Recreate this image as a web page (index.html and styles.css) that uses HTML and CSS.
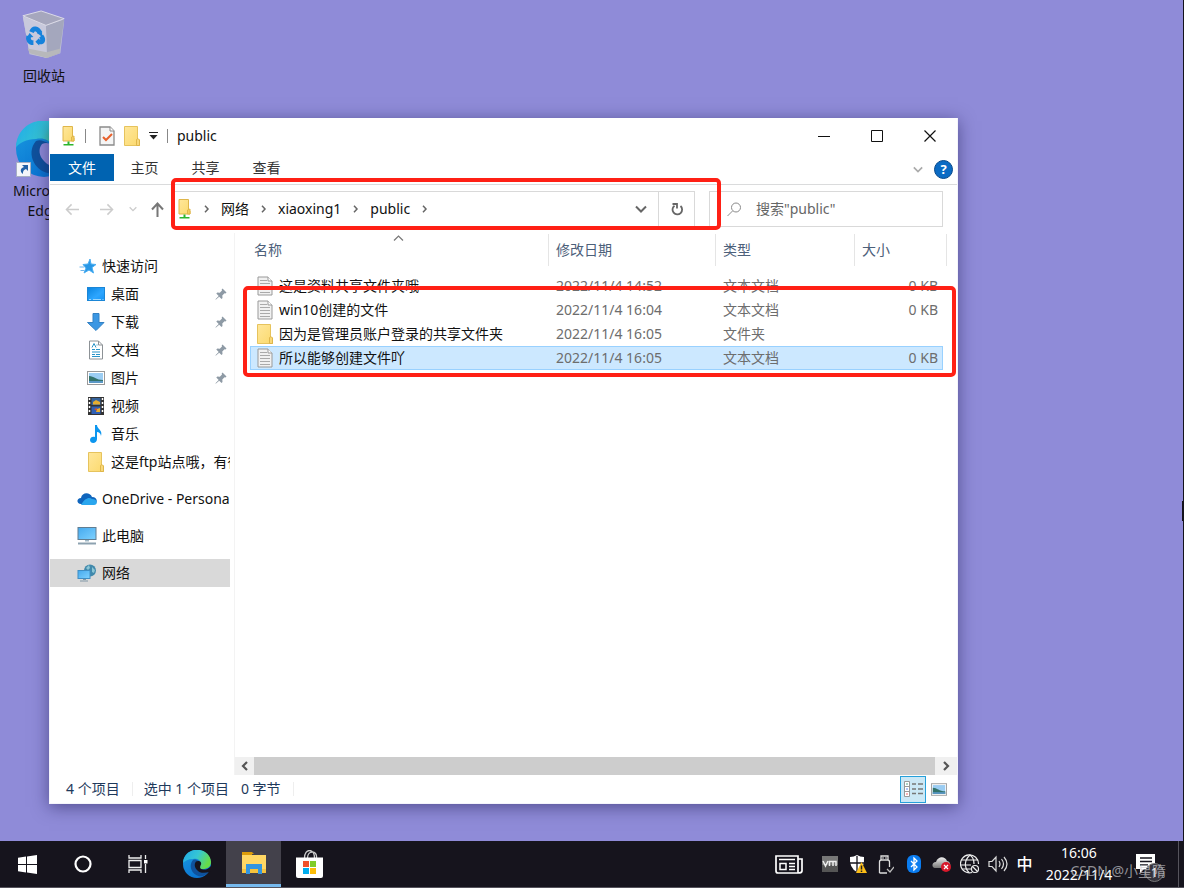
FILE: index.html
```html
<!DOCTYPE html>
<html lang="zh-CN">
<head>
<meta charset="utf-8">
<title>public</title>
<link rel="stylesheet" href="styles.css">
</head>
<body>
<svg class="defs" aria-hidden="true">
  <defs>
    <linearGradient id="edgeA" x1="0" y1="0" x2="1" y2="0.4"><stop offset="0" stop-color="#1fa8ea"/><stop offset=".55" stop-color="#36c6d4"/><stop offset="1" stop-color="#66dc48"/></linearGradient>
    <linearGradient id="edgeB" x1="0" y1="0" x2="0.6" y2="1"><stop offset="0" stop-color="#1a9be0"/><stop offset="1" stop-color="#0a72d2"/></linearGradient>
    <linearGradient id="screen" x1="0" y1="0" x2="1" y2="1"><stop offset="0" stop-color="#45a9ee"/><stop offset="1" stop-color="#7fd2ff"/></linearGradient>
    <linearGradient id="fold" x1="0" y1="0" x2="1" y2="1"><stop offset="0" stop-color="#ffe79b"/><stop offset="1" stop-color="#fbd96d"/></linearGradient>
    <linearGradient id="desk" x1="0" y1="0" x2="1" y2="1"><stop offset="0" stop-color="#0a84e0"/><stop offset=".6" stop-color="#2da6ff"/><stop offset="1" stop-color="#1693f4"/></linearGradient>
    <linearGradient id="cloudG" x1="0" y1="0" x2="0" y2="1"><stop offset="0" stop-color="#eee"/><stop offset="1" stop-color="#777"/></linearGradient>
    <symbol id="i-netfolder" viewBox="0 0 14 20"><path d="M1 .5h9.500v10.500l1.500 1v3H1z" fill="url(#fold)" stroke="#dfb64a"/><path d="M9.500 15v-4l2.500-1v5z" fill="#f3cd5e" stroke="#dfb64a"/><path d="M5.500 15.500h2V18h4v1.500h-10V18h4z" fill="#2cb52c"/></symbol>
    <symbol id="i-folder" viewBox="0 0 16 20"><path d="M.5.500h13V13l2 1v5.500H.5z" fill="url(#fold)" stroke="#e6c35d"/><path d="M12.500 19.500v-6l1.500-1 1.500 1.500v5.500z" fill="#f8d87a" stroke="#dfb64a"/></symbol>
    <symbol id="i-check" viewBox="0 0 16 20"><path d="M1 1h10l4 4v14H1z" fill="#f5f5f5" stroke="#8a8a8a" stroke-width="1.300"/><path d="M11 1v4h4" fill="#fff" stroke="#8a8a8a"/><path d="M4 11l3 3 6-6" fill="none" stroke="#e8612c" stroke-width="2"/></symbol>
    <symbol id="i-text" viewBox="0 0 16 20"><path d="M1 1h10l4 4v14H1z" fill="#f1f1f1" stroke="#999"/><path d="M11 1v4h4" fill="#fff" stroke="#999"/><path d="M3 4.500h7M3 7.500h10M3 10.500h10M3 13.500h10M3 16.500h10" stroke="#aaa"/></symbol>
    <symbol id="i-star" viewBox="0 0 18 18"><path d="M11 2l1 5 5 .5-4 3 1.500 5.500-4.500-3L5 16l2-5-3-3.500 5-.5z" fill="#2997e5" stroke="#4aaef2"/><path d="M.5 10h5M1.500 13.500h4" stroke="#6cb4ea"/></symbol>
    <symbol id="i-desktop" viewBox="0 0 18 18"><rect x=".5" y="2.500" width="17" height="13" fill="url(#desk)" stroke="#1b86d6"/><path d="M2 14.500h2M6 14.500h8M15.500 14.500h1" stroke="#9bd7ff"/></symbol>
    <symbol id="i-down" viewBox="0 0 18 18"><path d="M6 .5h6v9h5L9 17.500.500 9.500H6z" fill="#3b97e3" stroke="#3381c4"/></symbol>
    <symbol id="i-doc" viewBox="0 0 18 20"><path d="M2.500 1h9l4 4v14h-13z" fill="#fff" stroke="#8d9296"/><path d="M11.500 1v4h4" fill="none" stroke="#8d9296"/><path d="M5 7.500l2-4 2 4M9.500 5h1M5 9.500h3M9 9.500h4M5 12h8M5 14.500h3M9 14.500h4M5 16.500h8" fill="none" stroke="#2893c7"/></symbol>
    <symbol id="i-pic" viewBox="0 0 18 14"><rect x=".500" y=".500" width="17" height="13" fill="#fff" stroke="#999"/><path d="M2 2h14v10H2z" fill="#9bcdf3"/><path d="M2 5c5 0 7 4 14 4v3H2z" fill="#33736b"/><path d="M2 10h14v2H2z" fill="#5b98c6"/></symbol>
    <symbol id="i-video" viewBox="0 0 16 18"><path d="M0 0h16v18H0z" fill="#333"/><path d="M3.500 1h9v7h-9z" fill="#36639b"/><path d="M3.500 9.500h9V17h-9z" fill="#2e5fb5"/><path d="M5 5l3-2 4 2v2.500H5zM8 15l1-3 3-1v4z" fill="#e6ad2f"/><path d="M6 12l3-1v3z" fill="#cc5437"/><path d="M1.500 1v16M14.500 1v16" stroke="#fff" stroke-width="1.500" stroke-dasharray="2 2"/></symbol>
    <symbol id="i-music" viewBox="0 0 18 20"><path d="M8 1h2c0 4 6 5 4 11-.5-3-2-4-4-4v7c0 5-7 5-7 1 0-3 3-4 5-3z" fill="#0c96ef"/></symbol>
    <symbol id="i-onedrive" viewBox="0 0 20 14"><path d="M4 12C-1 12-.5 6 4 6c1-6 9-6 11-1 6 0 6 7 2 7z" fill="#0f65bd"/><path d="M4 13c4-7 8-8 11-6 6 0 6 6 2 6z" fill="#2aa6ee"/></symbol>
    <symbol id="i-pc" viewBox="0 0 20 18"><rect x="1" y=".500" width="18" height="12" fill="url(#screen)" stroke="#607d92"/><path d="M8 13h4v1.500H8z" fill="#9fb7c5"/><path d="M1 16.500h18" stroke="#8da2b0" stroke-width="2"/></symbol>
    <symbol id="i-network" viewBox="0 0 20 20"><circle cx="13" cy="7.500" r="6" fill="#4189ab"/><path d="M9 5l3-3 1 3-2 2zM15 4l3 3-1 3-2-1z" fill="#8cc6d6"/><rect x="1" y="7.500" width="12" height="8" fill="url(#screen)" stroke="#3f8ec4"/><path d="M6 16.500h3M3 18h8" stroke="#8198a7"/></symbol>
    <symbol id="i-pin" viewBox="0 0 12 12"><path d="M7.500.500l4 4-1 1-1-.300L7.300 7.500l.200 2.500-1 1-2.300-2.300L1 11.500l-.500.200.200-.700 3-3.100L1.300 5.500l1-1 2.500.200L7 2.500l-.300-1z" fill="#8e9aa5"/></symbol>
    <symbol id="i-edge" viewBox="0 0 28 28"><circle cx="14" cy="14" r="14" fill="url(#edgeB)"/><path d="M0 13C1-5 27-4 28 12c0 5-4 7-8 7-3 0-5-1-4-3 4-6-2-8-6-7-5 0-8 2-10 4z" fill="url(#edgeA)"/><path d="M10 10c-6 7 1 18 10 16 3-1 5-3 6-5-7 3-14 0-12-6 0-2 1-3 2-4-2-1-4-2-6-1z" fill="#0f529d"/><path d="M13 11.500c3-1.500 6 .5 5 3-1.500 3-1 4 1 4.800 3 .8 6.500 0 9-3.300v5l-1.700 1c-5 1.500-10 1-12.300-2-2.500-2.500-3-6-1-8.500z" class="edge-notch"/></symbol>
    <symbol id="i-chev-r" viewBox="0 0 7 8"><path d="M2 .800L5 4l-3 3.200" fill="none" stroke="#666" stroke-width="1.500"/></symbol>
    <symbol id="i-chev-d" viewBox="0 0 12 8"><path d="M1 1.500l5 5 5-5" fill="none" stroke="currentColor" stroke-width="2"/></symbol>
    <symbol id="i-arrow" viewBox="0 0 16 14"><path d="M15 7H2M7 1.500L1.500 7 7 12.500" fill="none" stroke="currentColor" stroke-width="1.600"/></symbol>
  </defs>
</svg>

<main class="desktop">
  <a class="shortcut bin" href="#">
    <svg width="46" height="50" viewBox="0 0 46 52"><path d="M1 7l7 39 18 4 14-5 4-34z" fill="#bfc1d4"/><path d="M25 16l19-6-5 35-13 5z" fill="#a4a7bd"/><path d="M1 7l24 9 1 34-18-5z" fill="#c8c9dc"/><path d="M6 40l20 4 14-4-1 5-13 5-18-5z" fill="#b7b8bb"/><path d="M1 6L20 1l24 8-19 7z" fill="#a6a7bd" stroke="#dedde8"/><g fill="none" stroke="#1682dc" stroke-width="5"><path d="M10 23c2-5 6-4 9 1"/><path d="M7 27c-1 4 1 7 5 7"/><path d="M17 33c5 1 6-2 3-6"/></g><path d="M16 24l5-1v5zM5 29l3-5 4 4zM18 29v8l-4-4z" fill="#1682dc"/></svg>
    <span>回收站</span>
  </a>
  <a class="shortcut edge" href="#">
    <span class="edge-pic"><svg class="edge-big" width="56" height="56"><use href="#i-edge"/></svg><svg class="link-badge" width="15" height="15" viewBox="0 0 15 15"><path d="M.5.500h14v14H.5z" fill="#f4f6fa" stroke="#a7afc4"/><path d="M6 3h6v6l-2-2c-3 1-3 3-3 5-4-3-2-6 1-7z" fill="#2161a7"/></svg></span>
    <span>Microsoft<br>Edge</span>
  </a>

  <section class="window" aria-label="public">
    <header class="titlebar">
      <svg width="14" height="20"><use href="#i-netfolder"/></svg>
      <i class="sep lead"></i>
      <button class="plain" aria-label="属性"><svg width="16" height="20"><use href="#i-check"/></svg></button>
      <button class="plain" aria-label="新建文件夹"><svg width="16" height="20"><use href="#i-folder"/></svg></button>
      <button class="plain" aria-label="自定义快速访问工具栏"><svg width="9" height="8" viewBox="0 0 9 8"><path d="M0 .5h9" stroke="#222"/><path d="M.5 3h8l-4 4.500z" fill="#222"/></svg></button>
      <i class="sep"></i>
      <h1>public</h1>
      <div class="caption">
        <button class="plain" aria-label="最小化"><svg width="12" height="12" viewBox="0 0 12 12"><path d="M0 6.500h12" stroke="#111"/></svg></button>
        <button class="plain" aria-label="最大化"><svg width="12" height="12" viewBox="0 0 12 12"><path d="M.5.500h11v11H.5z" fill="none" stroke="#111"/></svg></button>
        <button class="plain" aria-label="关闭"><svg width="12" height="12" viewBox="0 0 12 12"><path d="M.5.500l11 11M11.500.500l-11 11" stroke="#111" stroke-width="1.200"/></svg></button>
      </div>
    </header>

    <nav class="ribbon">
      <button class="tab file">文件</button><button class="tab">主页</button><button class="tab">共享</button><button class="tab">查看</button>
      <div class="ribbon-end">
        <button class="plain pale" aria-label="展开功能区"><svg width="10" height="7"><use href="#i-chev-d"/></svg></button>
        <button class="help" aria-label="帮助">?</button>
      </div>
    </nav>

    <div class="addressrow">
      <div class="history">
        <button class="plain off" aria-label="后退"><svg width="15" height="13"><use href="#i-arrow"/></svg></button>
        <button class="plain off" aria-label="前进"><svg class="flip" width="15" height="13"><use href="#i-arrow"/></svg></button>
        <button class="plain off small" aria-label="最近"><svg width="8" height="6"><use href="#i-chev-d"/></svg></button>
        <button class="plain up" aria-label="上移"><svg width="13" height="15" viewBox="0 0 13 15"><path d="M6.500 15V2M1 7.500L6.500 1.500l5.500 6" fill="none" stroke="#777" stroke-width="2"/></svg></button>
      </div>
      <div class="address">
        <svg width="14" height="20"><use href="#i-netfolder"/></svg>
        <svg width="7" height="8"><use href="#i-chev-r"/></svg>
        <button class="plain crumb">网络</button>
        <svg width="7" height="8"><use href="#i-chev-r"/></svg>
        <button class="plain crumb">xiaoxing1</button>
        <svg width="7" height="8"><use href="#i-chev-r"/></svg>
        <button class="plain crumb">public</button>
        <svg width="7" height="8"><use href="#i-chev-r"/></svg>
        <button class="plain drop" aria-label="以前的位置"><svg width="12" height="8"><use href="#i-chev-d"/></svg></button>
        <button class="plain refresh" aria-label="刷新"><svg width="14" height="14" viewBox="0 0 14 14"><path d="M10.500 4A4.800 4.800 0 1 1 4.500 3.700" fill="none" stroke="#666" stroke-width="1.800"/><path d="M2.500 2h4.500V6.500" fill="none" stroke="#666" stroke-width="1.800"/></svg></button>
      </div>
      <label class="search">
        <svg width="15" height="15" viewBox="0 0 15 15"><circle cx="9" cy="5.500" r="4.500" fill="none" stroke="#8a8a8a"/><path d="M5.500 9L.500 14" stroke="#8a8a8a"/></svg>
        <input type="text" placeholder='搜索"public"' aria-label="搜索">
      </label>
    </div>

    <div class="body">
      <nav class="tree">
        <a href="#" class="node"><svg width="18" height="18"><use href="#i-star"/></svg><span>快速访问</span></a>
        <a href="#" class="node sub"><svg width="18" height="18"><use href="#i-desktop"/></svg><span>桌面</span><svg class="pin" width="12" height="12"><use href="#i-pin"/></svg></a>
        <a href="#" class="node sub"><svg width="18" height="18"><use href="#i-down"/></svg><span>下载</span><svg class="pin" width="12" height="12"><use href="#i-pin"/></svg></a>
        <a href="#" class="node sub"><svg width="18" height="20"><use href="#i-doc"/></svg><span>文档</span><svg class="pin" width="12" height="12"><use href="#i-pin"/></svg></a>
        <a href="#" class="node sub"><svg width="18" height="14"><use href="#i-pic"/></svg><span>图片</span><svg class="pin" width="12" height="12"><use href="#i-pin"/></svg></a>
        <a href="#" class="node sub"><svg width="18" height="18"><use href="#i-video"/></svg><span>视频</span></a>
        <a href="#" class="node sub"><svg width="18" height="20"><use href="#i-music"/></svg><span>音乐</span></a>
        <a href="#" class="node sub"><svg width="18" height="20"><use href="#i-folder"/></svg><span>这是ftp站点哦，有很多文件</span></a>
        <a href="#" class="node root"><svg width="20" height="14"><use href="#i-onedrive"/></svg><span>OneDrive - Personal</span></a>
        <a href="#" class="node root"><svg width="20" height="18"><use href="#i-pc"/></svg><span>此电脑</span></a>
        <a href="#" class="node root current"><svg width="20" height="20"><use href="#i-network"/></svg><span>网络</span></a>
      </nav>

      <div class="content">
        <table class="files">
          <colgroup><col><col class="c-date"><col class="c-type"><col class="c-size"></colgroup>
          <thead><tr>
            <th>名称<svg class="sort" width="11" height="6" viewBox="0 0 11 6"><path d="M1 5.500l4.500-4.500L10 5.500" fill="none" stroke="#777" stroke-width="1.200"/></svg></th>
            <th>修改日期</th><th>类型</th><th>大小</th>
          </tr></thead>
          <tbody>
            <tr><td><span class="name"><svg width="16" height="20"><use href="#i-text"/></svg>这是资料共享文件夹哦</span></td><td>2022/11/4 14:52</td><td>文本文档</td><td>0 KB</td></tr>
            <tr><td><span class="name"><svg width="16" height="20"><use href="#i-text"/></svg>win10创建的文件</span></td><td>2022/11/4 16:04</td><td>文本文档</td><td>0 KB</td></tr>
            <tr><td><span class="name"><svg width="16" height="20"><use href="#i-folder"/></svg>因为是管理员账户登录的共享文件夹</span></td><td>2022/11/4 16:05</td><td>文件夹</td><td></td></tr>
            <tr class="picked"><td><span class="name"><svg width="16" height="20"><use href="#i-text"/></svg>所以能够创建文件吖</span></td><td>2022/11/4 16:05</td><td>文本文档</td><td>0 KB</td></tr>
          </tbody>
        </table>
        <div class="hscroll">
          <button class="plain" aria-label="向左滚动"><svg width="9" height="10" viewBox="0 0 9 10"><path d="M7 1L3 5l4 4" fill="none" stroke="#555" stroke-width="2.200"/></svg></button>
          <div class="thumb"></div>
          <button class="plain wide" aria-label="向右滚动"><svg width="9" height="10" viewBox="0 0 9 10"><path d="M2 1l4 4-4 4" fill="none" stroke="#555" stroke-width="2.200"/></svg></button>
        </div>
      </div>
    </div>

    <footer class="status">
      <span class="count">4 个项目</span>
      <span class="chosen"><span>选中 1 个项目</span><span>0 字节</span></span>
      <div class="views">
        <button class="plain view on" aria-label="详细信息"><svg width="19" height="16" viewBox="0 0 19 16"><path d="M.5.500h5v15h-5zM.5 5.500h5M.5 10.500h5" fill="#fff" stroke="#999"/><path d="M2.500 3h1" stroke="#286" stroke-width="1.500"/><path d="M2.500 8h1" stroke="#36e" stroke-width="1.500"/><path d="M2.500 13h1" stroke="#e33" stroke-width="1.500"/><path d="M8 3h4M14 3h5M8 8h4M14 8h5M8 12.500h4M14 12.500h5" stroke="#777" stroke-width="1.300"/></svg></button>
        <button class="plain view" aria-label="大图标"><svg width="16" height="13"><use href="#i-pic"/></svg></button>
      </div>
    </footer>
    <div class="mark mark-address"></div>
    <div class="mark mark-files"></div>
  </section>
  <i class="caret"></i>
</main>

<footer class="taskbar">
  <div class="apps">
    <button class="plain app" aria-label="开始"><svg width="19" height="19" viewBox="0 0 19 19"><path d="M0 2.700L8 1.600V9H0zM9 1.400L19 0v9H9zM0 10h8v7.400l-8-1.100zM9 10h10v9L9 17.600z" fill="#fff"/></svg></button>
    <button class="plain app" aria-label="搜索"><svg width="18" height="18" viewBox="0 0 18 18"><circle cx="9" cy="9" r="7.500" fill="none" stroke="#fff" stroke-width="2.200"/></svg></button>
    <button class="plain app" aria-label="任务视图"><svg width="20" height="18" viewBox="0 0 20 18"><path d="M1 0v3h12V0M1 18v-3h12v3M1 5.500h12v7H1zM17.500 0v4M17.500 9v9" fill="none" stroke="#eee" stroke-width="1.300"/><path d="M16 5h3.500v3.500H16z" fill="#fff"/></svg></button>
    <button class="plain app edge-app" aria-label="Microsoft Edge"><svg width="28" height="28"><use href="#i-edge"/></svg></button>
    <button class="plain app active" aria-label="文件资源管理器"><svg width="26" height="22" viewBox="0 0 26 22"><path d="M1 0h10l2 2H1z" fill="#d99a09"/><path d="M1 1h10v2h14v18H1z" fill="#ffd764"/><path d="M1 0h10v3H1z" fill="#dc9c0b"/><path d="M1 17h24v4H1z" fill="#f7c33c"/><path d="M5 12h16v10h-4v-5H9v5H5z" fill="#3295e0"/></svg></button>
    <button class="plain app" aria-label="Microsoft Store"><svg width="27" height="28" viewBox="0 0 27 28"><path d="M8.500 8c0-10 10-10 10 0M11.500 8c0-8 10-8 9 0" fill="none" stroke="#ccc" stroke-width="1.300"/><path d="M0 7.500h27V26q0 2-2 2H2q-2 0-2-2z" fill="#fff"/><path d="M7 11h6v6H7z" fill="#f1512b"/><path d="M14 11h6v6h-6z" fill="#80cc28"/><path d="M7 18h6v6H7z" fill="#00adef"/><path d="M14 18h6v6h-6z" fill="#fbbc09"/></svg></button>
  </div>
  <div class="tray">
    <button class="plain news" aria-label="资讯"><svg width="28" height="19" viewBox="0 0 28 19"><path d="M1 1h22v17H3q-2 0-2-2zM23 4h4v12q0 2-4 2" fill="none" stroke="#fff" stroke-width="1.700"/><path d="M4 4.500h16M14 8.500h6M14 11.500h6M14 14.500h6M5 8.500h6v6H5z" fill="none" stroke="#fff" stroke-width="1.500"/></svg></button>
    <button class="plain ti" aria-label="VMware"><svg width="16" height="16" viewBox="0 0 16 16"><path d="M0 0h16v16H0z" fill="#777"/><path d="M0 9h16v7H0z" fill="#555"/><path d="M1 5l2.500 5L6 5M7.500 10V5.500h6.500V10M11 6v4" fill="none" stroke="#eee" stroke-width="1.500"/></svg></button>
    <button class="plain ti" aria-label="安全中心"><svg width="18" height="18" viewBox="0 0 18 18"><path d="M8 0q3 2 7 2 1 12-7 15Q0 13 1 2q4 0 7-2z" fill="#fff"/><path d="M8 1v16M0 8h16" stroke="#16141d" stroke-width="1.300"/><path d="M12.500 7L18 18H7z" fill="#fcbd16"/><path d="M12.500 10.500v4M12.500 15.500V17" stroke="#222" stroke-width="1.500"/></svg></button>
    <button class="plain ti" aria-label="弹出设备"><svg width="16" height="19" viewBox="0 0 16 19"><path d="M3 5V1h7v4M1.500 18V7q0-2 2-2h6q2 0 2 2v5M1.500 18H9" fill="none" stroke="#ddd" stroke-width="1.300"/><path d="M5 2v2M8 2v2" stroke="#ddd"/><path d="M9 14l3 3 4-5" fill="none" stroke="#bbb" stroke-width="1.300"/></svg></button>
    <button class="plain ti" aria-label="蓝牙"><svg width="14" height="18" viewBox="0 0 14 18"><rect width="14" height="18" rx="6" fill="#0a7cf0"/><path d="M4 6l6 6-3 3V3l3 3-6 6" fill="none" stroke="#fff" stroke-width="1.300"/></svg></button>
    <button class="plain ti" aria-label="OneDrive"><svg width="20" height="16" viewBox="0 0 20 16"><path d="M3 12C-1 11 0 6 4 6c2-6 9-6 11-1 4 1 4 5 2 7z" fill="url(#cloudG)"/><circle cx="14" cy="11" r="5" fill="#d7182a"/><path d="M12 9l4 4M16 9l-4 4" stroke="#fff" stroke-width="1.200"/></svg></button>
    <button class="plain ti" aria-label="网络"><svg width="20" height="20" viewBox="0 0 20 20"><g fill="none" stroke="#eee" stroke-width="1.200"><path d="M12 18.500A9 9 0 1 1 18.500 10"/><path d="M9 18.500c-5-5-5-12 1-17.500 3 2 4 5 4 9M2 6h16M1 11h10M2 15h9"/><circle cx="15" cy="15" r="3.500"/><path d="M12.500 12.500l5 5"/></g></svg></button>
    <button class="plain ti" aria-label="音量"><svg width="20" height="18" viewBox="0 0 20 18"><path d="M1 6.500h3L8 2v14l-4-4.500H1zM11 6q2 3 0 6M13.500 4q4 5 0 10M16 2q6 7 0 14" fill="none" stroke="#ddd" stroke-width="1.200"/></svg></button>
    <button class="plain ime">中</button>
    <button class="plain clock"><time>16:06</time><time>2022/11/4</time></button>
    <button class="plain notice" aria-label="通知"><svg width="20" height="20" viewBox="0 0 20 20"><path d="M0 0h19v15H8l-4 4v-4H0z" fill="#fff"/><path d="M4 4h12M4 7.500h12M4 11h8" stroke="#16141d" stroke-width="1.300"/></svg><span class="badge">1</span></button>
  </div>
  <span class="watermark">CSDN @小星隋</span>
</footer>
</body>
</html>
```

FILE: styles.css
```css
* { box-sizing: border-box; }

body {
  margin: 0;
  height: 100vh;
  display: flex;
  flex-direction: column;
  overflow: hidden;
  font: 14px/20px "Noto Sans", "Noto Sans CJK SC", sans-serif;
  color: #111;
}

svg { display: block; flex: none; }
.defs { position: absolute; width: 0; height: 0; }
a { color: inherit; text-decoration: none; }

.plain {
  display: flex;
  align-items: center;
  justify-content: center;
  padding: 0;
  border: 0;
  background: none;
  font: inherit;
  color: inherit;
}

/* Desktop */
.desktop {
  --notch: #8f8bd8;
  position: relative;
  flex: 1;
  min-height: 0;
  background: #8f8bd8;
  border-right: 1px solid #14121c;
}

.shortcut {
  position: absolute;
  left: 0;
  width: 88px;
  display: flex;
  flex-direction: column;
  align-items: center;
  text-align: center;
}
.bin { top: 10px; gap: 6px; }
.edge { top: 121px; gap: 4px; }
.edge-pic { position: relative; }
.edge-notch { fill: var(--notch); }
.link-badge { position: absolute; left: 0; bottom: 0; }

.caret {
  position: absolute;
  right: 0;
  top: 501px;
  width: 1px;
  height: 20px;
  background: #14121c;
}

/* Window */
.window {
  position: absolute;
  left: 49px;
  top: 118px;
  right: 225px;
  bottom: 37px;
  display: flex;
  flex-direction: column;
  background: #fff;
  border: 1px solid #f4f4fb;
  border-top: 0;
  box-shadow: 0 3px 16px rgba(20, 15, 70, .5);
}

.titlebar {
  display: flex;
  align-items: center;
  gap: 9px;
  height: 36px;
  padding-left: 12px;
}
.sep { width: 1px; height: 14px; background: #888; }
.lead { margin-right: 4px; }
h1 { margin: 0; font-size: 14px; font-weight: 400; }
.caption { display: flex; margin-left: auto; margin-right: 1px; align-self: stretch; }
.caption .plain { width: 53px; }

.ribbon {
  display: flex;
  height: 31px;
  padding-bottom: 3px;
  border-bottom: 1px solid #dadbdc;
}
.tab {
  width: 61px;
  padding: 0;
  border: 0;
  background: none;
  font: inherit;
  color: #333;
}
.tab.file { width: 64px; background: #0063b1; color: #fff; }
.ribbon-end { display: flex; align-items: center; gap: 11px; margin-left: auto; padding: 3px 4px 0 0; }
.pale { color: #aaa; }
.help {
  width: 19px;
  height: 19px;
  padding: 0;
  border: 1px solid #07498c;
  border-radius: 50%;
  background: #0b6bc4;
  color: #fff;
  font: bold 13px/16px "Noto Sans", sans-serif;
}

.addressrow {
  display: flex;
  align-items: center;
  height: 48px;
  padding-right: 14px;
}
.history { display: flex; align-items: center; width: 123px; padding-left: 15px; gap: 19px; }
.off { color: #ccc; }
.small { margin: 0 -5px 0 -4px; }
.flip { transform: scaleX(-1); }
.address {
  flex: 1;
  display: flex;
  align-items: center;
  height: 36px;
  padding-left: 4px;
  gap: 11px;
  border: 1px solid #d9d9d9;
}
.drop { margin-left: auto; color: #666; }
.refresh { align-self: stretch; width: 36px; border-left: 1px solid #d9d9d9; }
.search {
  display: flex;
  align-items: center;
  gap: 14px;
  width: 234px;
  height: 36px;
  margin-left: 14px;
  padding-left: 17px;
  border: 1px solid #d9d9d9;
}
.search input {
  flex: 1;
  min-width: 0;
  padding: 0;
  border: 0;
  outline: 0;
  background: none;
  font: inherit;
}
.search input::placeholder { color: #666; opacity: 1; }

.body { flex: 1; display: flex; min-height: 0; }

/* Folder tree */
.tree {
  width: 185px;
  padding: 19px 4px 0 0;
  border-right: 1px solid #f3f3f3;
}
.node {
  display: flex;
  align-items: center;
  gap: 5px;
  height: 28px;
  padding-left: 29px;
  white-space: nowrap;
  overflow: hidden;
}
.node span { flex: 1; min-width: 0; overflow: hidden; }
.sub { padding-left: 37px; gap: 6px; }
.root { margin-top: 9px; padding-left: 27px; }
.current { background: #d9d9d9; }
.pin { margin-right: 3px; }

/* File list */
.content { flex: 1; min-width: 0; display: flex; flex-direction: column; }
.files {
  table-layout: fixed;
  width: calc(100% - 29px);
  margin: 1px 14px 0 15px;
  border-collapse: separate;
  border-spacing: 0;
}
.c-date { width: 167px; }
.c-type { width: 139px; }
.c-size { width: 89px; }
.files th {
  position: relative;
  height: 32px;
  padding: 0 0 0 7px;
  border-left: 1px solid #e5e5e5;
  text-align: left;
  font-weight: 400;
  color: #4c607a;
}
.files th:first-child { padding-left: 4px; border-left: 0; }
.files th:last-child::after {
  content: "";
  position: absolute;
  top: 0;
  bottom: 0;
  right: -4px;
  width: 1px;
  background: #e5e5e5;
}
.files thead::after { content: ""; display: block; height: 8px; }
.sort { position: absolute; left: 50%; top: 1px; margin-left: -6px; }
.files td {
  height: 24px;
  padding: 0 0 0 8px;
  border: 1px solid transparent;
  border-width: 1px 0;
  color: #6d6d6d;
  line-height: 20px;
}
.files td:first-child { padding-left: 7px; color: #111; }
.files td:last-child { padding-right: 5px; text-align: right; }
.name { display: flex; align-items: center; gap: 6px; white-space: nowrap; }
.picked td { background: #cce8ff; border-color: #99d1ff; }
.picked td:first-child { border-left-width: 1px; padding-left: 6px; }
.picked td:last-child { border-right-width: 1px; padding-right: 4px; }

.hscroll { display: flex; height: 18px; margin-top: auto; background: #f0f0f0; }
.hscroll .plain { width: 19px; }
.hscroll .wide { width: 22px; }
.thumb { flex: 1; background: #cdcdcd; }

.status { display: flex; align-items: center; height: 28px; padding-left: 16px; color: #1e395b; }
.count, .chosen { padding-right: 12px; border-right: 1px solid #eee; line-height: 14px; }
.chosen { display: flex; gap: 12px; padding-left: 11px; }
.views { display: flex; align-items: center; margin-left: auto; padding-right: 5px; }
.view { width: 26px; height: 27px; }
.on { border: 1px solid #26a0da; background: #cbe8f6; }

/* Red highlight frames */
.mark { position: absolute; border: 4px solid #ff2015; border-radius: 5px; pointer-events: none; }
.mark-address { left: 121px; top: 60px; right: 236px; height: 52px; }
.mark-files { left: 193px; top: 168px; right: 1px; height: 91px; }

/* Taskbar */
.taskbar {
  --notch: #16141d;
  position: relative;
  display: flex;
  height: 47px;
  background: #16141d;
  border-bottom: 1px solid #55535c;
  color: #fff;
}
.apps { display: flex; }
.app { width: 55px; }
.edge-app { margin: 0 2px 0 4px; }
.active { background: #43414b; border-bottom: 3px solid #76b9ed; margin-right: 1px; }
.tray { display: flex; margin-left: auto; margin-right: 5px; border-right: 1px solid #55535c; }
.news { width: 50px; margin-right: 2px; }
.ti { width: 28px; }
.ime { width: 25px; font-size: 16px; font-weight: 500; }
.clock { flex-direction: column; width: 84px; line-height: 22px; }
.notice { position: relative; width: 49px; margin-right: 8px; }
.badge {
  position: absolute;
  left: 24px;
  top: 22px;
  width: 19px;
  height: 19px;
  border: 1px solid #777;
  border-radius: 50%;
  background: #35333c;
  font-size: 13px;
  line-height: 17px;
}
.watermark {
  position: absolute;
  right: 18px;
  top: 20px;
  font-size: 14px;
  color: rgba(200, 200, 205, .7);
}
```
